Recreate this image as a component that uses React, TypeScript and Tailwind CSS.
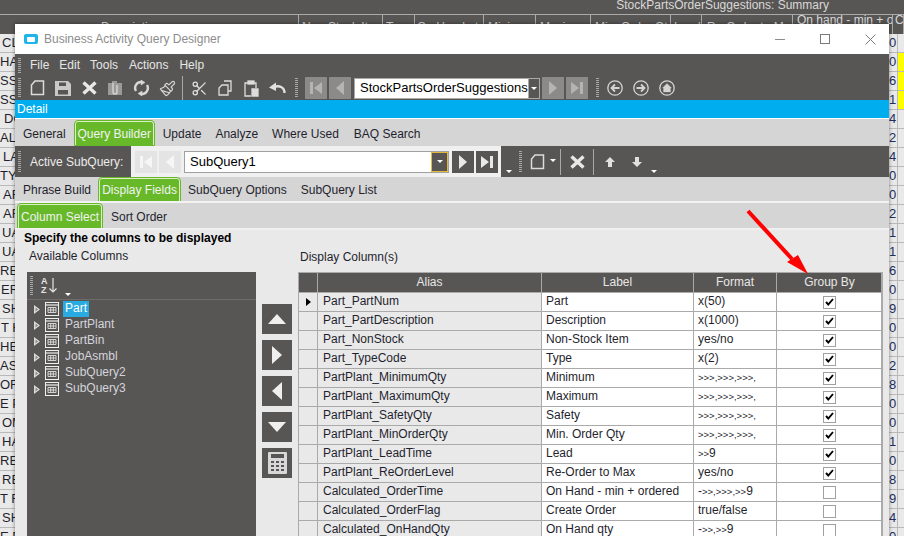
import React from "react";
import { Scissors, Paintbrush } from "lucide-react";

const leftRows: [string, string][] = [
  ["CL", "pl-[2px]"], ["HAR", "pl-0"], ["SS I", "pl-0"], ["SS I", "pl-0"], ["DO", "pl-[4px]"],
  ["AL", "pl-0"], ["LA", "pl-[3px]"], ["TY", "pl-0"], ["AR", "pl-[3px]"], ["AR", "pl-[3px]"],
  ["UA", "pl-[2px]"], ["UA", "pl-[2px]"], ["RES", "pl-0"], ["ER", "pl-[1px]"], ["SH", "pl-[2px]"],
  ["T HE", "pl-[1px]"], ["HEA", "pl-0"], ["AST", "pl-0"], ["ORT", "pl-0"], ["E PL", "pl-0"],
  ["OM", "pl-[2px]"], ["HA", "pl-[2px]"], ["RES", "pl-0"], ["RE", "pl-[2px]"], ["T RE", "pl-0"],
  ["SH", "pl-[2px]"], ["E PL", "pl-0"],
];

const rightDigits = "006142400211609002800108940".split("");

const headCols = [
  { w: "w-[299px]", t: "Description", c: "pl-[101px]" },
  { w: "w-[84px]", t: "Non-Stock Item", c: "pl-[3px]" },
  { w: "w-[32px]", t: "Type", c: "pl-[3px]" },
  { w: "w-[69px]", t: "On Hand qty", c: "pl-[2px]" },
  { w: "w-[52px]", t: "Minimum", c: "pl-[4px]" },
  { w: "w-[55px]", t: "Maximum", c: "pl-[4px]" },
  { w: "w-[80px]", t: "Min. Order Qty", c: "pl-[4px]" },
  { w: "w-[31px]", t: "Lead", c: "pl-[3px]" },
  { w: "w-[91px]", t: "Re-Order to Max", c: "pl-[5px]" },
  { w: "w-[100px]", t: "On hand - min + or", c: "pl-[4px] -mt-[7px]" },
  { w: "w-[11px]", t: "C", c: "pl-[2px] -mt-[7px]" },
];

const rows = [
  ["Part_PartNum", "Part", "x(50)", true],
  ["Part_PartDescription", "Description", "x(1000)", true],
  ["Part_NonStock", "Non-Stock Item", "yes/no", true],
  ["Part_TypeCode", "Type", "x(2)", true],
  ["PartPlant_MinimumQty", "Minimum", ">>>,>>>,>>>,", true],
  ["PartPlant_MaximumQty", "Maximum", ">>>,>>>,>>>,", true],
  ["PartPlant_SafetyQty", "Safety", ">>>,>>>,>>>,", true],
  ["PartPlant_MinOrderQty", "Min. Order Qty", ">>>,>>>,>>>,", true],
  ["PartPlant_LeadTime", "Lead", ">>9", true],
  ["PartPlant_ReOrderLevel", "Re-Order to Max", "yes/no", true],
  ["Calculated_OrderTime", "On Hand - min + ordered", "->>,>>>,>>9", false],
  ["Calculated_OrderFlag", "Create Order", "true/false", false],
  ["Calculated_OnHandQty", "On Hand qty", "->>,>>9", false],
] as [string, string, string, boolean][];

const tree = ["Part", "PartPlant", "PartBin", "JobAsmbl", "SubQuery2", "SubQuery3"];

function Grip({ h }: { h: string }) {
  return (
    <span
      className={`block w-[3px] ${h} bg-[repeating-linear-gradient(to_bottom,#a8a8a8_0,#a8a8a8_1px,transparent_1px,transparent_2px)]`}
    />
  );
}

function Slot({ children }: { children: React.ReactNode }) {
  return <span className="flex w-[26px] h-full items-center justify-center">{children}</span>;
}

function DocIcon({ c = "#dcdcdc" }: { c?: string }) {
  return (
    <svg width="15" height="16" viewBox="0 0 15 16" fill="none" stroke={c} strokeWidth="1.5">
      <path d="M5 1 H13.5 V14.5 H1.5 V5 Z" />
    </svg>
  );
}

function SaveIcon() {
  return (
    <svg width="16" height="15" viewBox="0 0 16 15" fill="#c9c9c9">
      <path d="M0 0 H13 L16 3 V15 H0 Z M4 1.5 V5 H11 V1.5 Z M3 9 V13.5 H13 V9 Z" fillRule="evenodd" />
    </svg>
  );
}

function XIcon() {
  return (
    <svg width="15" height="14" viewBox="0 0 15 14" stroke="#e8e8e8" strokeWidth="3.4" fill="none">
      <path d="M1.5 1.5 L13.5 12.5 M13.5 1.5 L1.5 12.5" />
    </svg>
  );
}

function ClipIcon() {
  return (
    <svg width="16" height="16" viewBox="0 0 16 16">
      <path d="M1 3 H5 V1 H10 V3 H15 V15 H1 Z" fill="#9a9a9a" />
      <path d="M6 3 V12 Q6 14 8 14 Q10 14 10 12 V5" fill="none" stroke="#dedede" strokeWidth="1.2" />
    </svg>
  );
}

function RefreshIcon() {
  return (
    <svg width="17" height="16" viewBox="0 0 17 16" fill="none" stroke="#d8d8d8" strokeWidth="2.4">
      <path d="M3 11 A6 6 0 0 1 9 2" />
      <path d="M14 5 A6 6 0 0 1 8 14" />
      <path d="M8 0 L12 2.5 L8 5 Z" fill="#d8d8d8" strokeWidth="0.5" />
      <path d="M9 11 L5 13.5 L9 16 Z" fill="#d8d8d8" strokeWidth="0.5" />
    </svg>
  );
}

function CopyIcon() {
  return (
    <svg width="14" height="16" viewBox="0 0 14 16" fill="none" stroke="#dcdcdc" strokeWidth="1.3">
      <path d="M6 1 H13 V11 H10" />
      <path d="M4 5 H10 V15 H1 V8 Z" fill="#585654" />
    </svg>
  );
}

function PasteIcon() {
  return (
    <svg width="15" height="17" viewBox="0 0 15 17" fill="none" stroke="#dcdcdc" strokeWidth="1.3">
      <path d="M4 3 H1 V16 H7" />
      <path d="M10 3 H12 V8" />
      <rect x="4" y="1" width="6" height="3" fill="#dcdcdc" />
      <path d="M8 9 H14 V16 H8 Z" fill="#dcdcdc" />
    </svg>
  );
}

function UndoIcon() {
  return (
    <svg width="17" height="12" viewBox="0 0 17 12" fill="none" stroke="#e0e0e0" strokeWidth="2.4">
      <path d="M15.5 11 C15.5 5 10 3 5 5" />
      <path d="M0 5.5 L7 0.5 L7 9 Z" fill="#e0e0e0" stroke="none" />
    </svg>
  );
}

function Tri({ dir, c, s = "w-[12px] h-[18px]" }: { dir: "l" | "r"; c: string; s?: string }) {
  return (
    <svg className={s} viewBox="0 0 12 18" fill={c}>
      {dir === "r" ? <path d="M1 0 L11 9 L1 18 Z" /> : <path d="M11 0 L1 9 L11 18 Z" />}
    </svg>
  );
}

function NavBtn({ kind, bg, c }: { kind: "first" | "prev" | "next" | "last"; bg: string; c: string }) {
  return (
    <span className={`flex w-[22px] h-[22px] items-center justify-center ${bg}`}>
      <svg width="14" height="14" viewBox="0 0 14 14" fill={c}>
        {kind === "first" && <path d="M1 1 H4 V13 H1 Z M13 1 V13 L5 7 Z" />}
        {kind === "prev" && <path d="M11 0 V14 L3 7 Z" />}
        {kind === "next" && <path d="M3 0 V14 L11 7 Z" />}
        {kind === "last" && <path d="M1 1 V13 L9 7 Z M10 1 H13 V13 H10 Z" />}
      </svg>
    </span>
  );
}

function Caret() {
  return <span className="block w-0 h-0 border-x-[3px] border-x-transparent border-t-[3px] border-t-white" />;
}

function CircleIcon({ kind }: { kind: "back" | "fwd" | "home" }) {
  return (
    <svg width="16" height="16" viewBox="0 0 16 16" fill="none" stroke="#d4d4d4" strokeWidth="1.3">
      <circle cx="8" cy="8" r="7.2" />
      {kind === "back" && <path d="M12.5 8 H4.5 M8 4.5 L4.5 8 L8 11.5" strokeWidth="1.8" />}
      {kind === "fwd" && <path d="M3.5 8 H11.5 M8 4.5 L11.5 8 L8 11.5" strokeWidth="1.8" />}
      {kind === "home" && <path d="M8 3.5 L12.5 8 H11.5 V12 H4.5 V8 H3.5 Z" fill="#d4d4d4" strokeWidth="0.3" />}
    </svg>
  );
}

function TableIcon() {
  return (
    <svg width="14" height="14" viewBox="0 0 14 14" fill="none" stroke="#efefef" strokeWidth="1">
      <rect x="0.5" y="0.5" width="13" height="13" />
      <path d="M0.5 3 H13.5" strokeWidth="1.2" />
      <path d="M3 5.5 H11 M3 8 H11 M3 10.5 H11 M3 5.5 V10.5 M5.7 5.5 V10.5 M8.3 5.5 V10.5 M11 5.5 V10.5" strokeWidth="0.8" />
    </svg>
  );
}

function Expander() {
  return (
    <svg width="6" height="9" viewBox="0 0 6 9">
      <path d="M0 0 L6 4.5 L0 9 Z" fill="#dcdcdc" />
      <path d="M1.5 2.5 L4 4.5 L1.5 6.5 Z" fill="#8a8a8a" />
    </svg>
  );
}

function Check() {
  return (
    <svg width="9" height="8" viewBox="0 0 9 8" fill="none" stroke="#000" strokeWidth="1.9">
      <path d="M1 4 L3.3 6.5 L8 1" />
    </svg>
  );
}

function MoveBtn({ children }: { children: React.ReactNode }) {
  return <span className="flex w-[30px] h-[30px] items-center justify-center bg-[#585654]">{children}</span>;
}

function GreenTab({ label, w }: { label: string; w: string }) {
  return (
    <span className={`flex ${w} h-full items-center justify-center rounded-t-[3px] border border-b-0 border-[#d8f0c4] outline outline-1 outline-[#67b929] bg-[#67b929] text-[#f2f2f2]`}>
      {label}
    </span>
  );
}

// ">" signs are drawn narrow in the original grid font
function FormatText({ text }: { text: string }) {
  const parts = text.split(/(>+,?)/).filter(Boolean);
  return (
    <>
      {parts.map((p, i) =>
        p.startsWith(">") ? (
          <span key={i} className="text-[9.5px]">{p}</span>
        ) : (
          <span key={i}>{p}</span>
        )
      )}
    </>
  );
}

export default function App() {
  return (
    <div className="relative w-[904px] h-[536px] overflow-hidden bg-[#e9e9e9] font-['Liberation_Sans',Arial,sans-serif] text-[12px] text-[#1f1f2e]">
      {/* report grid behind the dialog */}
      <div className="flex flex-col h-full">
        <div className="flex h-[14px] justify-end bg-[#585654] pr-[75px] text-[12px] leading-[11px] text-[#d8d8d8]">
          StockPartsOrderSuggestions: Summary
        </div>
        <div className="flex h-[20px] bg-[#585654] border-t border-[#a9a9a9] text-[12px] text-[#d8d8d8]">
          {headCols.map((c) => (
            <span key={c.t} className={`${c.w} shrink-0 border-r border-[#a9a9a9] whitespace-nowrap overflow-hidden`}>
              <span className={`block pt-[3px] ${c.c}`}>{c.t}</span>
            </span>
          ))}
        </div>
        <div className="flex flex-1 justify-between overflow-hidden">
          <div className="w-[15px] overflow-hidden text-[13px]">
            {leftRows.map(([t, pad], i) => (
              <div key={i} className={`h-[19px] border-b border-[#b9b9b9] whitespace-nowrap leading-[18px] ${pad}`}>
                {t}
              </div>
            ))}
          </div>
          <div className="flex w-[15px] text-[13px]">
            <div className="w-[9px] border-r border-[#b9b9b9]">
              {rightDigits.map((d, i) => (
                <div key={i} className="h-[19px] border-b border-[#b9b9b9] leading-[18px] text-[#1c2f5e]">
                  {d}
                </div>
              ))}
            </div>
            <div className="flex-1">
              {rightDigits.map((_, i) => (
                <div key={i} className={`h-[19px] border-b border-[#b9b9b9] ${i >= 1 && i <= 3 ? "bg-[#ffff00]" : ""}`} />
              ))}
            </div>
          </div>
        </div>
      </div>

      {/* dialog window */}
      <div className="absolute left-[15px] top-[24px] flex w-[874px] h-[512px] flex-col overflow-hidden bg-[#e9e9e9] shadow-[0_0_4px_rgba(0,0,0,0.45)]">
        <div className="flex h-[30px] shrink-0 items-center bg-white text-[#8c8c8c]">
          <span className="ml-[9px] flex w-[14px] h-[10px] items-center justify-center rounded-[2px] bg-[#1fb5e8]">
            <span className="block w-[8px] h-[5px] rounded-[1px] bg-white" />
          </span>
          <span className="ml-[6px]">Business Activity Query Designer</span>
          <span className="ml-[554px] block w-[10px] h-px bg-[#8c8c8c]" />
          <span className="ml-[35px] block w-[10px] h-[10px] border border-[#7a7a7a]" />
          <svg className="ml-[35px]" width="11" height="11" viewBox="0 0 11 11" stroke="#7a7a7a" fill="none">
            <path d="M0.5 0.5 L10.5 10.5 M10.5 0.5 L0.5 10.5" />
          </svg>
        </div>

        <div className="flex h-[22px] shrink-0 items-center bg-[#585654] pl-[3px] text-[#e6e6e6]">
          <Grip h="h-[15px]" />
          <span className="ml-[9px]">File</span>
          <span className="ml-[10px]">Edit</span>
          <span className="ml-[10px]">Tools</span>
          <span className="ml-[11px]">Actions</span>
          <span className="ml-[11px]">Help</span>
        </div>

        <div className="flex h-[24px] shrink-0 items-center bg-[#585654] pl-[3px]">
          <Grip h="h-[20px]" />
          <span className="ml-[3px] flex h-full items-center">
            <Slot><DocIcon /></Slot>
            <Slot><SaveIcon /></Slot>
            <Slot><XIcon /></Slot>
            <Slot><ClipIcon /></Slot>
            <Slot><RefreshIcon /></Slot>
            <Slot><Paintbrush size={17} color="#d8d8d8" strokeWidth={1.6} /></Slot>
          </span>
          <span className="ml-[2px] block w-px h-full bg-[#a9a9a9]" />
          <span className="ml-[3px] flex h-full items-center">
            <Slot><Scissors size={17} color="#e0e0e0" strokeWidth={1.8} /></Slot>
            <Slot><CopyIcon /></Slot>
            <Slot><PasteIcon /></Slot>
            <Slot><UndoIcon /></Slot>
          </span>
          <span className="ml-[5px]"><Grip h="h-[20px]" /></span>
          <span className="ml-[7px]"><NavBtn kind="first" bg="bg-[#8b8a89]" c="#b4b4b4" /></span>
          <span className="ml-[2px]"><NavBtn kind="prev" bg="bg-[#8b8a89]" c="#b4b4b4" /></span>
          <span className="ml-[3px] flex w-[186px] h-[21px] items-center border border-[#a9a9a9] bg-white text-[13px] text-black">
            <span className="flex-1 pl-[5px] whitespace-nowrap">StockPartsOrderSuggestions</span>
            <span className="flex w-[17px] h-full items-center justify-center bg-[#585654] border-l border-[#a9a9a9]">
              <Caret />
            </span>
          </span>
          <span className="ml-[2px]"><NavBtn kind="next" bg="bg-[#8b8a89]" c="#b4b4b4" /></span>
          <span className="ml-[2px]"><NavBtn kind="last" bg="bg-[#8b8a89]" c="#b4b4b4" /></span>
          <span className="ml-[8px]"><Grip h="h-[20px]" /></span>
          <span className="ml-[3px] flex h-full items-center">
            <Slot><CircleIcon kind="back" /></Slot>
            <Slot><CircleIcon kind="fwd" /></Slot>
            <Slot><CircleIcon kind="home" /></Slot>
          </span>
        </div>

        <div className="flex h-[19px] shrink-0 items-center border-b border-white bg-[#00adef] pl-[2px] text-white">
          Detail
        </div>

        <div className="flex h-[27px] shrink-0 items-end bg-[#d5d5d5] pl-[8px] pb-px">
          <span className="h-[23px] leading-[25px]">General</span>
          <span className="ml-[9px] h-[24px]"><GreenTab label="Query Builder" w="w-[79px]" /></span>
          <span className="ml-[9px] h-[23px] leading-[25px]">Update</span>
          <span className="ml-[14px] h-[23px] leading-[25px]">Analyze</span>
          <span className="ml-[14px] h-[23px] leading-[25px]">Where Used</span>
          <span className="ml-[15px] h-[23px] leading-[25px]">BAQ Search</span>
        </div>

        <div className="flex h-[31px] shrink-0 bg-[#585654]">
          <div className="flex w-[116px] items-center pl-[3px] text-[#ececec]">
            <Grip h="h-[22px]" />
            <span className="ml-[9px] whitespace-nowrap">Active SubQuery:</span>
          </div>
          <div className="flex w-[370px] items-center bg-[#f0f0f0] pl-[4px]">
            <NavBtn kind="first" bg="bg-[#e4e4e4]" c="#f6f6f6" />
            <span className="ml-[2px]"><NavBtn kind="prev" bg="bg-[#e4e4e4]" c="#f6f6f6" /></span>
            <span className="ml-[3px] flex w-[265px] h-[22px] items-center border border-[#a0a0a0] bg-white text-[13px] text-black">
              <span className="flex-1 pl-[5px]">SubQuery1</span>
              <span className="flex w-[17px] h-full items-center justify-center border border-[#e8b838] bg-[#585654]">
                <Caret />
              </span>
            </span>
            <span className="ml-[3px]"><NavBtn kind="next" bg="bg-[#585654]" c="#e8e8e8" /></span>
            <span className="ml-[2px]"><NavBtn kind="last" bg="bg-[#585654]" c="#e8e8e8" /></span>
          </div>
          <div className="flex flex-1 items-center">
            <span className="ml-[5px] self-end pb-[4px]"><Caret /></span>
            <span className="ml-[7px]"><Grip h="h-[22px]" /></span>
            <span className="ml-[8px]"><DocIcon /></span>
            <span className="ml-[5px] -mt-[3px]"><Caret /></span>
            <span className="ml-[4px] block w-px h-[26px] bg-[#a9a9a9]" />
            <span className="ml-[9px]"><XIcon /></span>
            <span className="ml-[8px] block w-px h-[26px] bg-[#a9a9a9]" />
            <svg className="ml-[11px]" width="10" height="10" viewBox="0 0 10 10" fill="#e0e0e0">
              <path d="M5 0 L10 5 H7 V10 H3 V5 H0 Z" />
            </svg>
            <svg className="ml-[17px]" width="10" height="10" viewBox="0 0 10 10" fill="#e0e0e0">
              <path d="M5 10 L10 5 H7 V0 H3 V5 H0 Z" />
            </svg>
            <span className="ml-[9px] self-end pb-[4px]"><Caret /></span>
          </div>
        </div>

        <div className="flex h-[24px] shrink-0 items-end bg-[#d5d5d5] pl-[8px]">
          <span className="h-[23px] leading-[24px]">Phrase Build</span>
          <span className="ml-[8px] h-[23px]"><GreenTab label="Display Fields" w="w-[81px]" /></span>
          <span className="ml-[8px] h-[23px] leading-[24px]">SubQuery Options</span>
          <span className="ml-[14px] h-[23px] leading-[24px]">SubQuery List</span>
        </div>
        <div className="h-[2px] shrink-0 bg-[#f2f2f2]" />
        <div className="flex h-[25px] shrink-0 items-end bg-[#d5d5d5] pl-[3px]">
          <span className="h-[24px]"><GreenTab label="Column Select" w="w-[84px]" /></span>
          <span className="ml-[9px] h-[24px] leading-[26px]">Sort Order</span>
        </div>

        <div className="flex flex-1 min-h-0 flex-col border-t-[2px] border-[#f0f0f0] pr-[5px]">
          <div className="h-[14px] shrink-0 pl-[9px] pt-[1px] font-bold leading-[14px] text-black">
            Specify the columns to be displayed
          </div>
          <div className="flex flex-1 min-h-0">
            <div className="ml-[12px] flex w-[229px] flex-col">
              <div className="h-[28px] shrink-0 pl-[2px] leading-[25px]">Available Columns</div>
              <div className="flex-1 bg-[#585654]">
                <div className="flex h-[28px] items-center border-b border-[#6e6c6a] pl-[3px]">
                  <Grip h="h-[20px]" />
                  <span className="ml-[8px] flex flex-col text-[9px] font-bold leading-[9px] text-[#e4e4e4]">
                    <span>A</span>
                    <span>Z</span>
                  </span>
                  <svg className="ml-[1px]" width="8" height="15" viewBox="0 0 8 15" fill="none" stroke="#e4e4e4" strokeWidth="1.2">
                    <path d="M4 0 V14 M0.5 10.5 L4 14 L7.5 10.5" />
                  </svg>
                  <span className="ml-[8px] self-end pb-[3px]"><Caret /></span>
                </div>
                <div className="pt-px">
                  {tree.map((n, i) => (
                    <div key={n} className="flex h-[16px] items-center pl-[7px]">
                      <Expander />
                      <span className="ml-[5px]"><TableIcon /></span>
                      <span
                        className={`ml-[4px] h-[16px] px-[2px] leading-[15px] ${
                          i === 0 ? "bg-[#29abe2] text-white" : "text-[#d4d4dc]"
                        }`}
                      >
                        {n}
                      </span>
                    </div>
                  ))}
                </div>
              </div>
            </div>

            <div className="ml-[6px] flex w-[30px] flex-col gap-[6px] pt-[60px]">
              <MoveBtn>
                <svg width="18" height="10" viewBox="0 0 18 10" fill="#efefef"><path d="M9 0 L18 10 H0 Z" /></svg>
              </MoveBtn>
              <MoveBtn>
                <svg width="10" height="18" viewBox="0 0 10 18" fill="#efefef"><path d="M0 0 L10 9 L0 18 Z" /></svg>
              </MoveBtn>
              <MoveBtn>
                <svg width="10" height="18" viewBox="0 0 10 18" fill="#efefef"><path d="M10 0 L0 9 L10 18 Z" /></svg>
              </MoveBtn>
              <MoveBtn>
                <svg width="18" height="10" viewBox="0 0 18 10" fill="#efefef"><path d="M0 0 H18 L9 10 Z" /></svg>
              </MoveBtn>
              <MoveBtn>
                <svg width="19" height="22" viewBox="0 0 19 22">
                  <rect width="19" height="22" rx="1" fill="#d8d8d8" />
                  <rect x="3" y="2" width="13" height="4" fill="#585654" />
                  <path
                    d="M3 9 h3 v2 h-3 Z M8 9 h3 v2 h-3 Z M13 9 h3 v2 h-3 Z M3 13 h3 v2 h-3 Z M8 13 h3 v2 h-3 Z M13 13 h3 v2 h-3 Z M3 17 h3 v2 h-3 Z M8 17 h3 v2 h-3 Z M13 17 h3 v2 h-3 Z"
                    fill="#585654"
                  />
                </svg>
              </MoveBtn>
            </div>

            <div className="ml-[6px] flex flex-1 flex-col">
              <div className="h-[28px] shrink-0 pl-[2px] leading-[27px]">Display Column(s)</div>
              <div className="w-[585px] border-l border-t border-r-2 border-[#aaaaaa]">
                <div className="grid h-[19px] grid-cols-[19px_224px_152px_83px_105px] bg-[#585654] text-center leading-[18px] text-[#e6e6e6]">
                  <span className="border-r border-[#aaaaaa]" />
                  <span className="border-r border-[#aaaaaa]">Alias</span>
                  <span className="border-r border-[#aaaaaa]">Label</span>
                  <span className="border-r border-[#aaaaaa]">Format</span>
                  <span>Group By</span>
                </div>
                {rows.map(([alias, label, format, on], i) => (
                  <div key={alias} className="grid h-[19px] grid-cols-[19px_224px_152px_83px_105px] border-t border-[#aaaaaa] bg-white leading-[16px]">
                    <span className="flex items-center justify-center border-r border-[#aaaaaa] bg-[#e9e9e9]">
                      {i === 0 && <span className="block border-y-[4px] border-l-[5px] border-y-transparent border-l-black" />}
                    </span>
                    <span className="border-r border-[#aaaaaa] bg-[#e9e9e9] pl-[5px]">{alias}</span>
                    <span className="border-r border-[#aaaaaa] pl-[4px]">{label}</span>
                    <span className="border-r border-[#aaaaaa] pl-[4px]">
                      <FormatText text={format} />
                    </span>
                    <span className="flex items-center justify-center">
                      <span className="flex w-[11px] h-[11px] box-content items-center justify-center border border-[#a0a0a0] bg-white">
                        {on && <Check />}
                      </span>
                    </span>
                  </div>
                ))}
              </div>
            </div>
          </div>
        </div>
      </div>

      {/* red annotation arrow */}
      <svg className="absolute left-0 top-0" width="904" height="536" viewBox="0 0 904 536" fill="#ff0000">
        <path d="M748 211 L792 259" stroke="#ff0000" strokeWidth="4" />
        <path d="M808 274 L787 262 L798 255 Z" />
      </svg>
    </div>
  );
}
